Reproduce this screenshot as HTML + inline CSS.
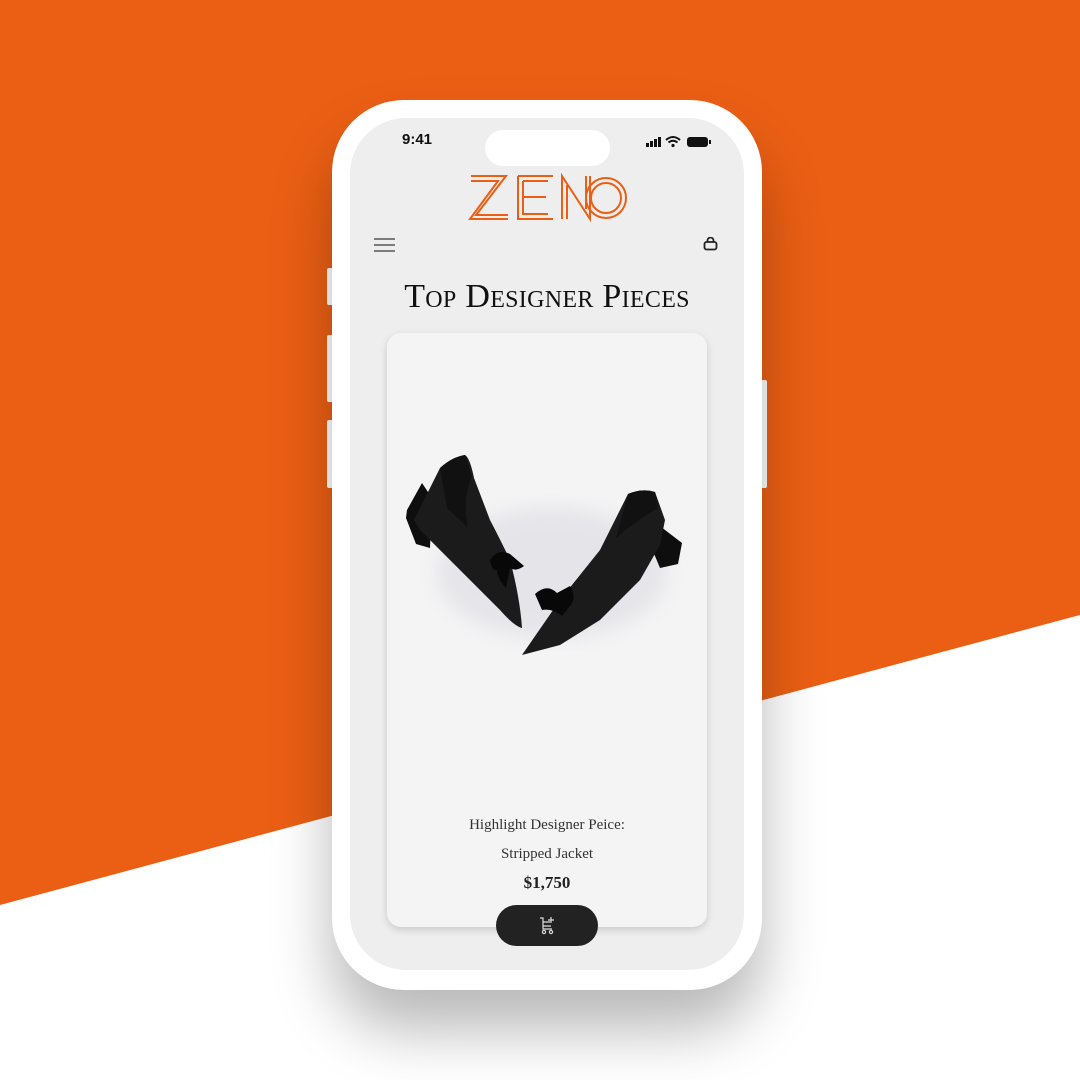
<!DOCTYPE html>
<html><head><meta charset="utf-8"><style>
*{margin:0;padding:0;box-sizing:border-box}
body{width:1080px;height:1080px;overflow:hidden;position:relative;background:#fff;font-family:"Liberation Serif",serif}
.bg{position:absolute;inset:0}
.phone{position:absolute;left:332px;top:100px;width:430px;height:890px;background:#fff;border-radius:72px;box-shadow:0 40px 60px rgba(0,0,0,.28)}
.btn{position:absolute;background:#fff;border-radius:2px}
.screen{position:absolute;left:350px;top:118px;width:394px;height:852px;background:#eeeeee;border-radius:56px;overflow:hidden}
.island{position:absolute;left:135px;top:12px;width:125px;height:36px;background:#fff;border-radius:18px}
.time{position:absolute;left:52px;top:13px;font:bold 15px "Liberation Sans",sans-serif;color:#111}
.card{position:absolute;left:37px;top:215px;width:320px;height:594px;background:#f4f4f5;border-radius:14px;box-shadow:0 3px 8px rgba(0,0,0,.15)}
.title{position:absolute;left:0;width:394px;top:160px;text-align:center;font-size:34px;font-variant:small-caps;color:#111;letter-spacing:.3px}
.t1{position:absolute;width:394px;left:0;text-align:center;color:#333;font-size:15px}
.cart{position:absolute;left:146px;top:787px;width:102px;height:41px;background:#222;border-radius:21px}
</style></head><body>
<svg class="bg" width="1080" height="1080"><polygon points="0,0 1080,0 1080,615 0,905" fill="#EB5F14"/></svg>
<div class="btn" style="left:327px;top:268px;width:6px;height:37px"></div>
<div class="btn" style="left:327px;top:335px;width:6px;height:67px"></div>
<div class="btn" style="left:327px;top:420px;width:6px;height:68px"></div>
<div class="btn" style="left:761px;top:380px;width:6px;height:108px"></div>
<div class="phone"></div>
<div class="screen">
<div class="island"></div>
<div class="time">9:41</div>
<svg style="position:absolute;left:294px;top:17px" width="70" height="14">
<rect x="2" y="8" width="3" height="4" fill="#111"/><rect x="6" y="6" width="3" height="6" fill="#111"/><rect x="10" y="4" width="3" height="8" fill="#111"/><rect x="14" y="2" width="3" height="10" fill="#111"/>
<path d="M22 5 Q29 -1 36 5 M24.5 7.5 Q29 4 33.5 7.5" stroke="#111" stroke-width="2" fill="none"/><circle cx="29" cy="10.5" r="1.6" fill="#111"/>
<rect x="43" y="2" width="21" height="10" rx="3" fill="#111"/><rect x="65" y="5" width="2" height="4" fill="#111"/>
</svg>
<svg style="position:absolute;left:118px;top:55px" width="162" height="50" fill="none" stroke="#EB5F14" stroke-width="2">
<path d="M3 3H38L8 42H40 M3 8H30L2 46H40"/>
<path d="M50 3H85 M50 3V46H85 M55 8H80 M55 8V41H80 M55 24H78"/>
<path d="M94 46V3L122 46V3 M99 46V12 M118 3V36"/>
<circle cx="138" cy="25" r="20"/><circle cx="138" cy="25" r="15"/>
</svg>
<svg style="position:absolute;left:24px;top:120px" width="22" height="14" stroke="#555" stroke-width="1.5"><path d="M0 1H21M0 7H21M0 13H21"/></svg>
<svg style="position:absolute;left:353px;top:119px" width="16" height="14" fill="none" stroke="#222" stroke-width="1.8"><rect x="1.5" y="5" width="12" height="7.5" rx="2"/><path d="M4.5 5V3.5a3 3 0 0 1 6 0V5"/></svg>
<div class="title">Top Designer Pieces</div>
<div class="card">
<svg style="position:absolute;left:15px;top:115px" width="300" height="230">
<defs><filter id="s"><feGaussianBlur stdDeviation="10"/></filter></defs>
<ellipse cx="150" cy="125" rx="115" ry="65" fill="#d6d6de" opacity=".5" filter="url(#s)"/>
<path d="M5 62 L20 35 L30 50 L28 100 L14 96 L4 70 Z" fill="#0e0e0e"/>
<path d="M12 72 L38 20 Q50 9 63 7 Q68 10 72 30 L88 72 Q100 95 108 112 Q118 150 120 180 Q112 178 98 162 L48 112 L18 82 Z" fill="#1b1b1b"/>
<path d="M38 20 Q50 9 63 7 L70 28 Q60 50 66 80 L45 60 Z" fill="#111"/>
<path d="M88 112 Q96 100 108 106 L122 118 Q114 124 108 120 L104 140 Q95 130 95 122 Q90 124 88 112 Z" fill="#080808"/>
<path d="M250 72 L280 95 L276 116 L258 120 L248 96 Z" fill="#0e0e0e"/>
<path d="M120 207 L158 152 L198 102 L226 46 Q240 40 253 44 L263 72 L258 97 L238 132 L198 172 L158 197 Z" fill="#1b1b1b"/>
<path d="M226 46 Q240 40 253 44 L256 60 Q238 70 214 90 Z" fill="#111"/>
<path d="M133 146 Q145 135 155 145 L168 138 Q175 150 168 158 L160 168 Q150 160 140 162 Z" fill="#080808"/>
</svg>
<div class="t1" style="top:484px;left:-37px">Highlight Designer Peice:</div>
<div class="t1" style="top:513px;left:-37px">Stripped Jacket</div>
<div class="t1" style="top:540px;left:-37px;font-weight:bold;font-size:17px;color:#222">$1,750</div>
</div>
<div class="cart">
<svg style="position:absolute;left:43px;top:11px" width="17" height="19" fill="none" stroke="#ddd" stroke-width="1.2"><path d="M1 2H4V13H13 M4 6H11 M4 10H12 M12 1V7 M9 4H15"/><circle cx="5" cy="16" r="1.6"/><circle cx="12" cy="16" r="1.6"/></svg>
</div>
</div>
</body></html>
